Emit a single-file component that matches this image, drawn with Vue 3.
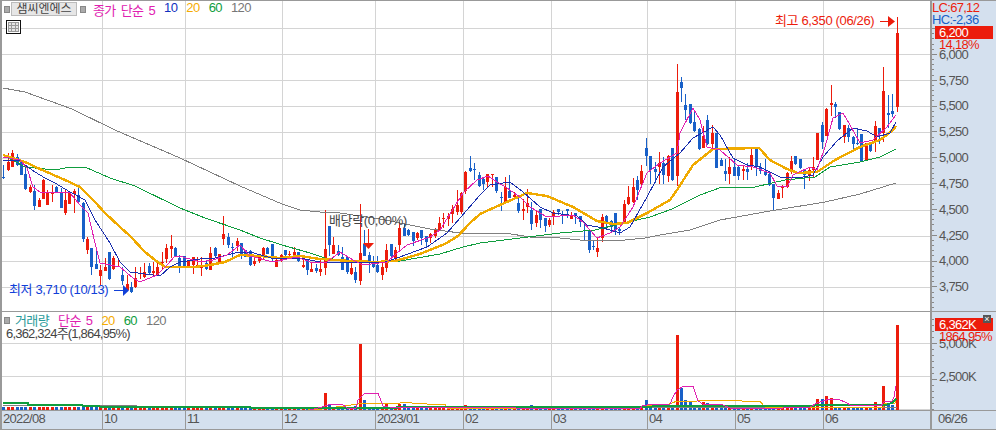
<script setup>
const segA = `b105,148,140,143 r70,125,95,118 r60,110,68,110 b72,108,82,105 b90,135,97,135 b115,180,132,177 r165,190,172,186 b165,240,183,228 r205,232,210,230 r148,208,150,207 r180,226,185,225 r165,215,187,192 b168,190,172,188 b175,235,187,235 r180,255,210,250 r183,222,185,220 r178,250,183,192 b170,218,196,216 b215,335,218,327 r320,370,327,360 b355,435,355,412 b352,418,402,418 r405,465,420,437 r385,425,412,423 b365,450,365,447 r378,420,383,415 r385,410,408,412 b410,465,435,452 r435,480,462,480 b455,488,472,488 r410,472,445,472 r410,445,430,433 r400,445,427,443 b400,435,408,430 r395,440,423,430 r395,435,410,437 r365,420,395,398 r342,400,355,388 r315,385,348,357 b350,380,354,378 b375,428,383,408 b378,412,378,410 r390,412,390,410 r380,430,380,405 r382,410,405,408 r380,437,410,413 b392,420,400,418 r350,420,370,422 b350,382,355,380 r372,400,372,395 r258,345,312,328 b310,355,320,343 b338,390,350,352 r325,365,333,347 b338,385,340,372 b360,382,360,380 b360,408,362,405 r378,408,393,402 r378,400,382,395 r350,385,353,380 b352,372,353,370 b342,392,342,388 r388,412,390,410 r372,397,376,395 b360,380,360,375 r362,385,372,376 r352,378,365,375 b365,395,365,392 r375,415,405,410 b388,435,388,422 r400,428,417,425 b402,430,415,425 r390,438,418,428 r240,435,357,413 b288,378,288,345 r322,372,345,372 b345,378,362,375 b352,420,380,418 b380,430,382,428 r395,435,415,433 b410,458,425,450 r222,465,370,455 b300,378,342,378 b365,428,375,400 b378,415,392,410 b378,428,405,425 r395,450,412,435 r342,425,360,413 b342,390,342,378 r350,390,360,388 r280,360,293,345 b280,320,295,318 b298,320,300,315 b305,348,305,332 r305,330,310,325 b300,345,300,325 b318,350,318,335 r310,340,313,325 r295,325,297,317 r262,305,278,300 r250,295,265,268 r250,290,258,268 r225,280,237,252 r180,255,225,245 r185,250,188,245 r123,192,125,182 b78,125,114,122 b100,150,118,121 b125,170,135,168`
const segB = `b380,420,388,403 r372,412,373,398 r372,410,373,376 b380,427,382,425 b425,482,440,443 r380,460,410,458 b375,445,422,444 r425,447,435,440 b445,490,458,482 r448,512,477,482 r418,490,458,470 b455,538,480,522 r480,530,495,520 b478,535,478,512 b503,545,505,530 r503,530,510,525 r480,525,485,500 b478,497,478,488 b482,522,495,496 b478,505,478,485 r485,507,497,505 b490,522,490,497 b497,530,497,515 b515,570,540,543 b543,608,543,600 b570,600,587,590 r565,622,595,608 r492,575,500,563 b495,530,498,515 b510,545,512,530 b490,555,490,540 b535,555,538,545 r450,520,462,515 r408,465,441,462 r385,460,411,455 b378,450,390,420 r345,410,363,402 b265,350,295,320 b318,402,318,360 b335,398,358,367 r305,400,340,352 b320,400,340,375 r315,395,318,378 b295,395,295,390 r42,408,125,378 b82,158,96,113 b132,210,165,180 b162,222,162,220 b185,245,215,243 b235,300,237,297 r228,295,258,295 b195,285,210,282 r225,300,250,282 b250,355,250,355 b325,350,330,347 b328,395,363,372 r320,402,350,372 b328,380,350,378 b345,390,350,378 r345,390,358,365 b340,390,357,365 r290,358,315,352 b292,380,295,352 b340,372,352,365 b328,378,362,375 b370,408,372,405 b402,482,402,445 r420,445,428,445 r405,445,408,415 r365,412,368,410 r318,372,333,365 b318,345,318,342 b326,355,326,353 b358,418,358,375 r350,392,360,375 r322,382,352,362 r250,330,250,330 b215,295,225,275 r175,258,178,258 r105,197,160,165 b155,202,162,170 b187,240,187,237 r225,280,225,262 b225,275,235,262 b258,305,260,282 b235,285,280,283 b252,335,252,332 r280,330,280,330 b275,305,275,303 r213,305,228,275 b235,282,235,252 r50,275,123,248 b135,235,190,197 b132,200,182,192`

const parse = (s, base) => s.split(' ').map((t) => {
  const [a, b, c, d] = t.slice(1).split(',').map(Number)
  return { up: t[0] === 'r', wt: base + a / 3, wb: base + b / 3, bt: base + c / 3, bb: base + d / 3 }
})
const raw = [...parse(segA, 130), ...parse(segB, 50), { up: true, wt: 17, wb: 112, bt: 33, bb: 107 }]
const bigVol = { 325: 393, 359: 344, 363: 400, 356: 406, 386: 404, 399: 404, 403: 404, 465: 405, 329: 404, 531: 405, 645: 400, 655: 405, 677: 335, 680: 388, 685: 400, 689: 402, 703: 402, 707: 403, 817: 399, 821: 399, 825: 396, 830: 398, 874: 402, 883: 386, 887: 403, 892: 405, 896: 325 }
const candles = raw.map((c, i) => {
  const cx = 3.3 + 4.4 * i
  const x = Math.round(cx)
  let volTop = 407
  for (const k in bigVol) if (Math.abs(Number(k) - cx) <= 2.2) volTop = bigVol[k]
  return {
    x,
    color: c.up ? '#ec1c0c' : '#1860c8',
    wt: Math.round(c.wt),
    wh: Math.max(1, Math.round(c.wb - c.wt)),
    bt: Math.round(c.bt),
    bh: Math.max(1, Math.round(c.bb - c.bt)),
    volTop,
  }
})

const pts = (a) => a.map((p) => p.join(',')).join(' ')
const ma120 = pts([[3,88],[25,92],[72,109],[115,130],[180,158],[240,186],[282,204],[300,210],[320,212],[340,213],[360,216],[380,219],[400,223],[430,229],[460,233],[505,233],[530,237],[560,238],[580,240],[600,241],[625,240],[645,238],[660,235],[690,230],[720,220],[770,211],[825,202],[860,194],[896,183]])
const ma60 = pts([[3,155],[25,167],[55,170],[70,167],[85,167],[110,178],[135,186],[180,208],[205,218],[240,230],[260,238],[282,245],[310,253],[325,258],[350,261],[400,261],[440,254],[463,247],[480,243],[520,238],[560,233],[595,230],[620,224],[650,217],[672,209],[680,205],[700,195],[722,187],[755,187],[785,180],[815,177],[830,167],[860,162],[880,157],[896,149]])
const ma20 = pts([[3,155],[25,162],[40,169],[65,180],[80,187],[95,202],[105,213],[120,227],[130,236],[145,252],[155,260],[165,267],[195,267],[210,265],[225,262],[240,255],[260,256],[280,258],[300,256],[320,259],[350,261],[375,262],[395,261],[420,254],[445,244],[458,236],[470,223],[480,214],[500,205],[527,193],[547,196],[573,207],[597,221],[613,224],[627,223],[647,213],[670,200],[677,190],[693,165],[713,149],[759,148],[770,160],[787,169],[798,173],[817,172],[835,160],[860,147],[880,140],[893,130],[896,126]])
const ma10 = pts([[3,160],[20,160],[25,165],[35,172],[45,178],[55,183],[70,192],[85,200],[95,220],[110,243],[120,262],[130,272],[160,276],[170,267],[180,262],[200,259],[215,258],[235,253],[250,252],[275,259],[300,258],[320,262],[360,263],[385,262],[397,258],[427,247],[447,233],[467,210],[480,195],[490,185],[510,182],[523,192],[540,207],[553,213],[577,216],[587,225],[603,228],[620,233],[630,227],[647,197],[663,167],[680,153],[693,138],[713,127],[720,135],[733,158],[747,165],[760,167],[780,177],[803,177],[813,175],[823,157],[837,141],[853,128],[867,131],[877,137],[890,133],[896,122]])
const ma5 = pts([[3,157],[20,160],[27,168],[33,187],[40,192],[60,192],[70,193],[80,205],[88,213],[95,243],[100,263],[120,267],[133,278],[140,282],[157,275],[167,265],[175,256],[183,257],[200,262],[213,260],[227,255],[240,245],[250,256],[273,262],[297,257],[313,263],[327,262],[340,252],[353,260],[363,265],[387,262],[397,253],[407,245],[430,237],[440,230],[463,193],[477,180],[488,176],[497,182],[507,188],[520,197],[530,207],[547,217],[573,215],[583,222],[597,238],[610,233],[620,227],[633,207],[647,173],[660,163],[677,153],[680,133],[693,108],[700,120],[707,147],[720,150],[737,165],[753,167],[770,173],[777,186],[787,187],[793,175],[810,167],[817,170],[825,147],[833,118],[843,113],[850,125],[860,143],[873,140],[887,127],[896,115]])

const vGray = pts([[3,405],[135,405],[138,407],[897,407]])
const vGreen = pts([[3,403],[28,403],[28,405],[80,405],[85,406],[98,406],[102,407],[397,408],[397,407],[622,407],[683,406],[810,406],[820,405],[885,405],[892,403],[896,399]])
const vOrange = pts([[308,409],[322,409],[358,404],[380,403],[400,403],[402,402],[410,402],[412,403],[427,404],[445,404],[447,408],[547,408],[623,407],[667,405],[677,401],[697,401],[700,400],[740,400],[742,401],[760,401],[763,405],[765,407],[883,407],[885,403],[895,403],[896,399]])
const vMagenta = pts([[3,410],[310,410],[322,407],[331,404],[342,404],[347,408],[356,408],[358,400],[365,393],[378,393],[383,406],[388,407],[640,409],[642,406],[653,404],[670,404],[673,397],[677,390],[684,386],[693,386],[698,401],[703,404],[723,405],[730,408],[783,408],[810,407],[817,403],[823,401],[830,399],[838,399],[847,403],[850,405],[881,406],[884,402],[892,401],[894,397],[896,386]])

const monthLines = [102, 185, 282, 375, 463, 551, 647, 735, 823]
const priceGrid = [28, 54, 80, 106, 132, 158, 184, 210, 236, 261, 287]
const volGrid = [343, 376, 409]
const priceLabels = [
  ['6,000', 54], ['5,750', 80], ['5,500', 105], ['5,250', 131], ['5,000', 157],
  ['4,750', 183], ['4,500', 209], ['4,250', 235], ['4,000', 260], ['3,750', 286],
]
const priceTicks = []
for (let y = 28; y < 311; y += 5.17) priceTicks.push({ y: Math.round(y), major: Math.round((y - 28) / 5.17) % 5 === 0 })
const volTicks = []
for (let y = 319; y < 410; y += 6) volTicks.push({ y: Math.round(y), major: Math.abs(y - 343) < 1 || Math.abs(y - 379) < 1 })
const months = [
  { text: '2022/08', x: 3 }, { text: '10', x: 104 }, { text: '11', x: 187 }, { text: '12', x: 284 },
  { text: '2023/01', x: 377 }, { text: '02', x: 465 }, { text: '03', x: 553 }, { text: '04', x: 649 },
  { text: '05', x: 737 }, { text: '06', x: 825 },
]
</script>

<template>
  <div class="frame">
    <div class="row price-row">
      <div class="pane">
        <svg class="plot" width="928" height="310" viewBox="2 1 928 310">
          <line v-for="y in priceGrid" :key="y" class="grid" x1="2" x2="930" :y1="y + 0.5" :y2="y + 0.5" />
          <line v-for="x in monthLines" :key="x" class="grid" :x1="x + 0.5" :x2="x + 0.5" y1="1" y2="311" />
          <g v-for="(c, i) in candles" :key="i" :fill="c.color">
            <rect :x="c.x" :y="c.wt" width="1" :height="c.wh" />
            <rect :x="c.x - 1" :y="c.bt" width="3" :height="c.bh" />
          </g>
          <polyline class="ln" :points="ma120" stroke="#808080" />
          <polyline class="ln" :points="ma60" stroke="#0f9d3e" />
          <polyline class="ln w3" :points="ma20" stroke="#f0aa00" />
          <polyline class="ln" :points="ma10" stroke="#1a2fae" />
          <polyline class="ln" :points="ma5" stroke="#e020b0" />
          <text class="note red" x="775" y="25">최고 6,350 (06/26)</text>
          <path d="M880 21.5H889" stroke="#ec1c0c" stroke-width="1" />
          <path d="M888 16L895 21.5L888 27Z" fill="#ec1c0c" />
          <text class="note blue" x="9" y="294">최저 3,710 (10/13)</text>
          <path d="M114 290.5H124" stroke="#1140d8" stroke-width="1" />
          <path d="M123 285L129 290.5L123 296Z" fill="#1140d8" />
          <text class="note dark" x="329" y="225">배당락(0,00%)</text>
          <path d="M368.5 229V243" stroke="#ec1c0c" stroke-width="1" />
          <path d="M363 243H374L368.5 249Z" fill="#ec1c0c" />
        </svg>
        <div class="legend">
          <span class="handle"></span>
          <span class="stock">샘씨엔에스</span>
          <span class="handle second"></span>
          <span class="series">
            <span class="magenta">종가 단순 5</span>
            <span class="navy">10</span>
            <span class="orange">20</span>
            <span class="green">60</span>
            <span class="gray">120</span>
          </span>
        </div>
        <svg class="table-icon" width="15" height="14" viewBox="0 0 15 14">
          <rect x="0.5" y="0.5" width="14" height="13" fill="#fff" stroke="#111" />
          <rect x="2.5" y="2.5" width="10" height="9" fill="#e4e4e4" stroke="#999" />
          <path d="M5.5 3V11M9.5 3V11M3 5.5H12M3 8.5H12" stroke="#999" fill="none" />
        </svg>
      </div>
      <div class="axis">
        <svg width="64" height="310" viewBox="932 1 64 310">
          <line v-for="(t, i) in priceTicks" :key="i" class="tick" x1="932" :x2="t.major ? 937 : 934" :y1="t.y + 0.5" :y2="t.y + 0.5" />
          <text v-for="l in priceLabels" :key="l[0]" class="axis-text" x="939" :y="l[1] + 5">{{ l[0] }}</text>
          <text class="axis-text strong red" x="932" y="12">LC:67,12</text>
          <text class="axis-text strong hc" x="932" y="24">HC:-2,36</text>
          <rect x="935" y="26" width="58" height="13" fill="#ec1c0c" />
          <text class="axis-text white" x="939" y="37">6,200</text>
          <text class="axis-text strong red" x="939" y="49">14,18%</text>
        </svg>
      </div>
    </div>
    <div class="row vol-row">
      <div class="pane">
        <svg class="plot" width="928" height="98" viewBox="2 312 928 98">
          <line v-for="y in volGrid" :key="y" class="grid" x1="2" x2="930" :y1="y + 0.5" :y2="y + 0.5" />
          <line v-for="x in monthLines" :key="x" class="grid" :x1="x + 0.5" :x2="x + 0.5" y1="312" y2="410" />
          <rect v-for="(c, i) in candles" :key="i" :x="c.x - 1" :y="c.volTop" width="3" :height="410 - c.volTop" :fill="c.color" />
          <polyline class="ln" :points="vGray" stroke="#808080" />
          <polyline class="ln" :points="vOrange" stroke="#f0aa00" />
          <polyline class="ln w2" :points="vGreen" stroke="#0f9d3e" />
          <polyline class="ln" :points="vMagenta" stroke="#e020b0" />
        </svg>
        <div class="vol-legend">
          <div class="vol-line">
            <span class="handle"></span>
            <span class="series">
              <span class="teal">거래량</span>
              <span class="magenta">단순 5</span>
              <span class="orange">20</span>
              <span class="green">60</span>
              <span class="gray">120</span>
            </span>
          </div>
          <div class="vol-value">6,362,324주(1,864,95%)</div>
        </div>
      </div>
      <div class="axis">
        <svg width="64" height="98" viewBox="932 312 64 98">
          <line v-for="(t, i) in volTicks" :key="i" class="tick" x1="932" :x2="t.major ? 937 : 934" :y1="t.y + 0.5" :y2="t.y + 0.5" />
          <text class="axis-text" x="939" y="348">5,000K</text>
          <text class="axis-text" x="939" y="381">2,500K</text>
          <rect x="935" y="318" width="58" height="13" fill="#ec1c0c" />
          <text class="axis-text white" x="939" y="329">6,362K</text>
          <text class="axis-text strong red" x="939" y="341">1864,95%</text>
        </svg>
        <button class="close" type="button">×</button>
      </div>
    </div>
    <div class="row date-row">
      <div class="dates">
        <span v-for="m in months" :key="m.text" class="date" :style="{ left: m.x - 2 + 'px' }">{{ m.text }}</span>
        <i v-for="x in monthLines" :key="x" class="date-tick" :style="{ left: x - 2 + 'px' }"></i>
      </div>
      <div class="axis date-end"><span>06/26</span></div>
    </div>
  </div>
</template>

<style scoped>
.frame {
  width: 996px;
  height: 430px;
  box-sizing: border-box;
  border-top: 1px solid #999;
  border-bottom: 1px solid #999;
  border-left: 2px solid #999;
  display: flex;
  flex-direction: column;
  background: #fff;
  font-family: "Liberation Sans", "Noto Sans CJK KR", sans-serif;
  font-size: 13px;
  overflow: hidden;
}
.row { display: flex; border-bottom: 1px solid #999; }
.price-row { height: 311px; box-sizing: border-box; }
.vol-row { height: 99px; box-sizing: border-box; }
.date-row { height: 18px; border-bottom: 0; background: #d4e0ee; }
.pane { position: relative; width: 928px; flex: none; }
.plot { display: block; }
.grid { stroke: #d4d4d4; stroke-width: 1; shape-rendering: crispEdges; }
.ln { fill: none; stroke-width: 1; shape-rendering: crispEdges; }
.w3 { stroke-width: 2.4; }
.w2 { stroke-width: 2; }
.axis {
  flex: 1;
  position: relative;
  background: #d4e0ee;
  border-left: 2px solid #999;
}
.axis svg { display: block; }
.tick { stroke: #888; shape-rendering: crispEdges; }
.axis-text { font-size: 13px; letter-spacing: -0.7px; fill: #555; }
.axis-text.white { fill: #fff; }
.axis-text.strong.red { fill: #ec1c0c; }
.axis-text.hc { fill: #1860c8; }
.note { font-size: 13px; letter-spacing: -0.35px; }
.note.red { fill: #ec1c0c; }
.note.blue { fill: #1140d8; }
.note.dark { fill: #444; }
.legend {
  position: absolute;
  left: 2px;
  top: 1px;
  display: flex;
  align-items: center;
  gap: 1px;
  height: 14px;
}
.handle {
  width: 4px;
  height: 5px;
  background: #aaa;
  border: 1px solid #888;
  flex: none;
}
.handle.second { margin-left: 2px; }
.stock {
  background: #e6e6e6;
  border: 1px solid #bbb;
  width: 66px;
  box-sizing: border-box;
  text-align: center;
  line-height: 12px;
  height: 14px;
  color: #444;
  font-size: 12px;
  white-space: nowrap;
  overflow: hidden;
}
.series { display: flex; gap: 9px; margin-left: 6px; letter-spacing: -0.6px; word-spacing: 2px; white-space: nowrap; }
.magenta { color: #e020b0; }
.navy { color: #1030c0; }
.orange { color: #f5ab00; }
.green { color: #0f9d3e; }
.gray { color: #777; }
.teal { color: #2a9a9a; }
.table-icon { position: absolute; left: 4px; top: 19px; }
.vol-legend { position: absolute; left: 2px; top: 2px; letter-spacing: -0.8px; color: #444; line-height: 13px; white-space: nowrap; }
.vol-line { display: flex; align-items: center; gap: 2px; }
.vol-line .series { margin-left: 3px; }
.vol-value { margin-left: 2px; }
.close {
  position: absolute;
  left: 51px;
  top: 3px;
  width: 8px;
  height: 8px;
  padding: 0;
  border: 0;
  background: #555;
  color: #fff;
  font: 9px/8px "Liberation Sans", sans-serif;
}
.dates { position: relative; width: 928px; flex: none; color: #555; letter-spacing: -0.7px; }
.date { position: absolute; top: 1px; line-height: 14px; }
.date-tick { position: absolute; top: 0; width: 1px; height: 18px; background: #999; }
.date-end { padding-left: 6px; color: #555; letter-spacing: -0.7px; line-height: 14px; }
.date-end span { display: block; margin-top: 1px; }
</style>
